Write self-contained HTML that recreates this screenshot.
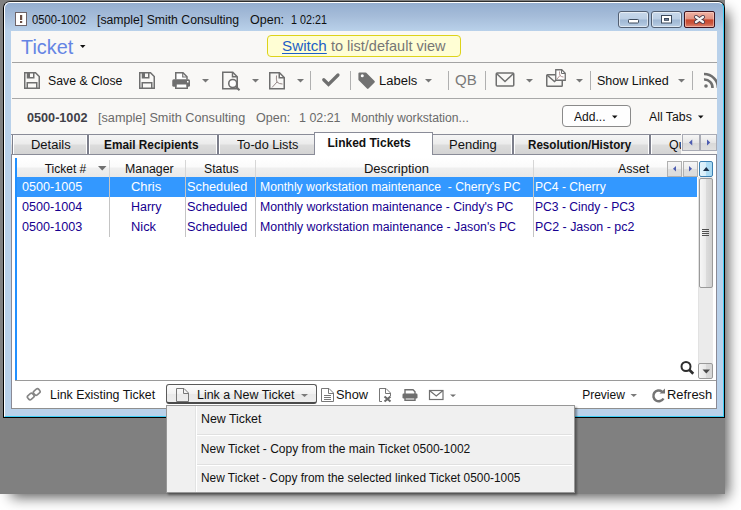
<!DOCTYPE html>
<html><head><meta charset="utf-8">
<style>
html,body{margin:0;padding:0}
body{width:741px;height:510px;position:relative;overflow:hidden;background:#fff;font-family:"Liberation Sans",sans-serif}
.a{position:absolute;box-sizing:border-box}
.t{position:absolute;white-space:pre;font-family:"Liberation Sans",sans-serif}
</style></head><body>
<!-- gray desktop with shadow -->
<div class="a" style="left:0;top:0;width:725px;height:494px;background:#808080;box-shadow:7px 7px 13px -4px rgba(0,0,0,0.66)"></div>
<!-- window frame -->
<div class="a" style="left:3px;top:1px;width:722px;height:417px;border:1px solid #000;border-top-color:#2e2e2e;border-radius:7px 7px 0 0;background:linear-gradient(#93adcf 0px,#a5bcd9 14px,#b9d1ea 29px,#b9d1ea 100%)"></div>
<div class="a" style="left:4px;top:2px;width:720px;height:415px;border-left:1px solid #fff;border-top:1px solid #fff;border-right:1px solid #3ccdf5;border-bottom:1px solid #3ccdf5;border-radius:6px 6px 0 0"></div>
<!-- client -->
<div class="a" style="left:11px;top:31px;width:706px;height:378px;background:#f9f8f6"></div>
<!-- caption buttons -->
<div class="a" style="left:618px;top:11px;width:31px;height:17px;border:1px solid #525f72;border-radius:3px;background:linear-gradient(#c8d8ea 0%,#bccfe5 47%,#9fb7d3 53%,#a9c0da 75%,#bcd0e6 100%);box-shadow:inset 0 0 0 1px rgba(255,255,255,.55)"></div>
<div class="a" style="left:651px;top:11px;width:31px;height:17px;border:1px solid #525f72;border-radius:3px;background:linear-gradient(#c8d8ea 0%,#bccfe5 47%,#9fb7d3 53%,#a9c0da 75%,#bcd0e6 100%);box-shadow:inset 0 0 0 1px rgba(255,255,255,.55)"></div>
<div class="a" style="left:684px;top:11px;width:31px;height:17px;border:1px solid #3e1420;border-radius:2px;background:linear-gradient(#efb2a4 0%,#e29483 45%,#c8472d 53%,#cb563e 75%,#de8774 100%);box-shadow:inset 0 0 0 1px rgba(255,220,210,.5)"></div>
<!-- yellow switch box -->
<div class="a" style="left:267px;top:35px;width:194px;height:22px;border:1px solid #ddd31a;border-radius:4px;background:#fffed4"></div>
<!-- separators -->
<div class="a" style="left:12px;top:62px;width:705px;height:1px;background:#a3a3a3"></div>
<div class="a" style="left:12px;top:98px;width:705px;height:1px;background:#a8a8a8"></div>
<!-- Add button -->
<div class="a" style="left:562px;top:105px;width:69px;height:22px;border:1px solid #8a8a8a;border-radius:4px;background:#fefefe"></div>
<!-- tab strip -->
<div class="a" style="left:11px;top:134px;width:670px;height:1px;background:#8a8c98"></div>
<div class="a" style="left:11px;top:135px;width:670px;height:19px;background:linear-gradient(#f5f5f5 0,#ececec 45%,#dcdcdc 55%,#d4d4d4 100%)"></div>
<div class="a" style="left:11px;top:154px;width:706px;height:1px;background:#8a8c98"></div>
<!-- tab separators -->
<div class="a" style="left:12px;top:135px;width:1px;height:19px;background:#7d7f8b"></div>
<div class="a" style="left:13px;top:135px;width:1px;height:19px;background:#fff"></div>
<div class="a" style="left:86px;top:135px;width:1px;height:19px;background:#fff"></div>
<div class="a" style="left:87px;top:135px;width:2px;height:19px;background:#7d7f8b"></div>
<div class="a" style="left:89px;top:135px;width:1px;height:19px;background:#fff"></div>
<div class="a" style="left:216px;top:135px;width:1px;height:19px;background:#fff"></div>
<div class="a" style="left:217px;top:135px;width:2px;height:19px;background:#7d7f8b"></div>
<div class="a" style="left:219px;top:135px;width:1px;height:19px;background:#fff"></div>
<div class="a" style="left:511px;top:135px;width:1px;height:19px;background:#fff"></div>
<div class="a" style="left:512px;top:135px;width:2px;height:19px;background:#7d7f8b"></div>
<div class="a" style="left:514px;top:135px;width:1px;height:19px;background:#fff"></div>
<div class="a" style="left:648px;top:135px;width:1px;height:19px;background:#fff"></div>
<div class="a" style="left:649px;top:135px;width:2px;height:19px;background:#7d7f8b"></div>
<div class="a" style="left:651px;top:135px;width:1px;height:19px;background:#fff"></div>
<!-- active tab -->
<div class="a" style="left:314px;top:132px;width:119px;height:24px;border:1px solid #8a8c98;border-bottom:none;background:#fff"></div>
<!-- tab scroll buttons -->
<div class="a" style="left:681px;top:134px;width:36px;height:21px;background:#f9f8f6"></div>
<div class="a" style="left:682px;top:134px;width:18px;height:17px;border:1px solid #a9abb5;background:linear-gradient(#f6f6f6,#e6e6e6 50%,#d8d8d8 51%,#e0e0e0)"></div>
<div class="a" style="left:700px;top:134px;width:17px;height:17px;border:1px solid #a9abb5;background:linear-gradient(#f6f6f6,#e6e6e6 50%,#d8d8d8 51%,#e0e0e0)"></div>
<div class="a" style="left:681px;top:154px;width:36px;height:1px;background:#8a8c98"></div>
<!-- content panel -->
<div class="a" style="left:11px;top:155px;width:706px;height:254px;background:#fff;border-left:1px solid #8a8a96;border-right:1px solid #8a8a96;border-bottom:1px solid #8f8f8f"></div>
<!-- grid -->
<div class="a" style="left:15px;top:158px;width:2px;height:222px;background:#2290ff"></div>
<div class="a" style="left:17px;top:158px;width:681px;height:19px;background:linear-gradient(#fff 0,#fbfbfb 45%,#efefef 55%,#e9e9e9 100%)"></div>
<div class="a" style="left:17px;top:177px;width:680px;height:20px;background:#3398ff"></div>
<div class="a" style="left:109px;top:160px;width:1px;height:17px;background:#d6d6d6"></div><div class="a" style="left:109px;top:177px;width:1px;height:60px;background:#c4c4c4"></div>
<div class="a" style="left:185px;top:160px;width:1px;height:17px;background:#d6d6d6"></div><div class="a" style="left:185px;top:177px;width:1px;height:60px;background:#c4c4c4"></div>
<div class="a" style="left:255px;top:160px;width:1px;height:17px;background:#d6d6d6"></div><div class="a" style="left:255px;top:177px;width:1px;height:60px;background:#c4c4c4"></div>
<div class="a" style="left:533px;top:160px;width:1px;height:17px;background:#d6d6d6"></div><div class="a" style="left:533px;top:177px;width:1px;height:60px;background:#c4c4c4"></div>
<div class="a" style="left:15px;top:380px;width:701px;height:1px;background:#9a9a9a"></div>
<!-- grid h-scroll buttons -->
<div class="a" style="left:667px;top:161px;width:15px;height:16px;border:1px solid #b0b0b0;background:linear-gradient(#f6f6f6,#ececec 50%,#dedede 51%,#dcdcdc)"></div>
<div class="a" style="left:683px;top:161px;width:15px;height:16px;border:1px solid #b0b0b0;background:linear-gradient(#f6f6f6,#ececec 50%,#dedede 51%,#dcdcdc)"></div>
<!-- v scrollbar -->
<div class="a" style="left:698px;top:177px;width:15px;height:187px;background:#ebebeb;border-left:1px solid #e2e2e2"></div>
<div class="a" style="left:699px;top:161px;width:14px;height:16px;border:1px solid #3c7fb1;border-radius:2px;background:linear-gradient(90deg,#e3f4fc 0,#d6eefa 50%,#b0def5 51%,#a8d9f2 100%)"></div>
<div class="a" style="left:699px;top:178px;width:14px;height:110px;border:1px solid #9a9a9a;border-radius:2px;background:linear-gradient(90deg,#f6f6f6 0,#eaeaea 50%,#dcdcdc 51%,#d0d0d0 100%)"></div>
<div class="a" style="left:698px;top:363px;width:15px;height:16px;border:1px solid #9a9a9a;border-radius:2px;background:linear-gradient(90deg,#f4f4f4 0,#e8e8e8 50%,#dadada 51%,#d6d6d6 100%)"></div>
<!-- Link a New Ticket button -->
<div class="a" style="left:166px;top:384px;width:151px;height:20px;border:1px solid #5a5a5a;border-bottom:2px solid #4a4a4a;border-radius:3px;background:linear-gradient(#fcfcfc 0%,#f2f2f2 50%,#e9e9e9 55%,#ededed 100%)"></div>
<!-- dropdown menu -->
<div class="a" style="left:166px;top:405px;width:409px;height:88px;border:1px solid #979797;background:#f0f0f0;box-shadow:2px 2px 2px rgba(0,0,0,.35)"></div>
<div class="a" style="left:195px;top:406px;width:1px;height:86px;background:#e2e3e3"></div>
<div class="a" style="left:196px;top:406px;width:1px;height:86px;background:#fff"></div>
<div class="a" style="left:197px;top:434px;width:375px;height:1px;background:#e0e0e0"></div>
<div class="a" style="left:197px;top:435px;width:375px;height:1px;background:#fff"></div>
<div class="a" style="left:197px;top:464px;width:375px;height:1px;background:#e0e0e0"></div>
<div class="a" style="left:197px;top:465px;width:375px;height:1px;background:#fff"></div>
<!-- Qu clipped tab text -->
<div class="a" style="left:652px;top:135px;width:29px;height:19px;overflow:hidden"><span class="t" style="left:17px;top:4px;font-size:12.4px;line-height:12px;color:#111">Queue</span></div>
<svg class="a" style="left:0;top:0" width="741" height="510" viewBox="0 0 741 510">
<g fill="none" stroke="#6f6f6f" stroke-width="1.5">
<!-- title icon -->
<rect x="15.5" y="12.5" width="11" height="13" fill="#fff" stroke="#6e6468" stroke-width="1"/>
</g>
<rect x="20" y="15" width="2.2" height="5" fill="#6a4e44"/>
<rect x="20" y="21" width="2.2" height="2" fill="#6a4e44"/>
<!-- caption glyphs -->
<rect x="628.5" y="19.5" width="10" height="3.5" rx="0.8" fill="#fff" stroke="#3d4a5c" stroke-width="1"/>
<rect x="661.5" y="15.5" width="10" height="7.5" fill="#fff" stroke="#3d4a5c" stroke-width="1"/>
<rect x="664.5" y="18.5" width="4" height="1.8" fill="#7a8aa8" stroke="#3d4a5c" stroke-width="1"/>
<path d="M696,17 L703,22 M703,17 L696,22" stroke="#4a3a48" stroke-width="4" stroke-linecap="round"/>
<path d="M696,17 L703,22 M703,17 L696,22" stroke="#f4f4f4" stroke-width="2.3" stroke-linecap="round"/>
<!-- Ticket dropdown arrow -->
<path d="M80,45 H85.5 L82.75,48 Z" fill="#111"/>
<g fill="none" stroke="#6f6f6f" stroke-width="1.5">
<!-- floppy 1 -->
<path d="M24.75,72.75 H35.5 L39.25,76.5 V88.25 H24.75 Z"/>
<path d="M27.5,73 V77.75 H33.75 V73"/>
<path d="M27.25,88 V82.75 H36.75 V88"/>
<!-- floppy 2 -->
<path d="M139.75,72.75 H150.5 L154.25,76.5 V88.25 H139.75 Z"/>
<path d="M142.5,73 V77.75 H148.75 V73"/>
<path d="M142.25,88 V82.75 H151.75 V88"/>
<!-- printer -->
<path d="M175.75,79.5 V72.75 H183 L187,76.75 V79.5" fill="#fff"/>
<path d="M182.75,73 V77 H186.75" stroke-width="1.2"/>
<!-- preview doc -->
<path d="M222.75,88.75 V72.25 H232.75 L237.25,76.75 V88.75 Z"/>
<path d="M232.5,72.5 V76.75 H237"/>
<circle cx="232.75" cy="83.5" r="4" fill="#fff" stroke-width="1.6"/>
<path d="M235.75,86.5 L239.5,90.25" stroke-width="2"/>
<!-- pdf doc -->
<path d="M269.75,72.75 H279.5 L284.25,77.5 V88.75 H269.75 Z"/>
<path d="M279.25,73 V77.75 H284"/>
</g>
<rect x="27" y="73" width="3" height="5" fill="#6f6f6f"/>
<rect x="142" y="73" width="3" height="5" fill="#6f6f6f"/>
<rect x="172.25" y="79.25" width="17.75" height="7.5" rx="1.5" fill="#6f6f6f"/>
<rect x="187" y="81" width="1.5" height="1.5" fill="#fff"/>
<rect x="176.5" y="84.5" width="10" height="3.25" fill="#fff"/>
<path d="M175.75,84 V88.25 H187.25 V84" fill="none" stroke="#6f6f6f" stroke-width="1.5"/>
<path d="M276.5,75.5 Q276,79.5 277,82 M277,82 L272,87.5 M277,82 Q279,84 282.5,84" fill="none" stroke="#8a7a7a" stroke-width="0.9"/>
<!-- check -->
<path d="M323.75,79.75 L328.5,84.5 L338,75" fill="none" stroke="#6f6f6f" stroke-width="3.2" stroke-linejoin="miter" stroke-linecap="round"/>
<!-- tag -->
<path d="M359.5,73.5 H365.5 L373.75,81.75 L367.75,87.75 L359.5,79.5 Z" fill="#727272" stroke="#727272" stroke-width="2.2" stroke-linejoin="round"/>
<circle cx="362.25" cy="75.75" r="1.5" fill="#fff"/>
<!-- envelope -->
<g fill="none" stroke="#6f6f6f" stroke-width="1.5">
<rect x="496.25" y="73" width="17.5" height="13" rx="1"/>
<path d="M496.5,73.5 L505,81.5 L513.5,73.5"/>
<!-- envelope + pdf -->
<rect x="546.75" y="74.75" width="15.5" height="11.5" rx="0.8"/>
<path d="M547,75 L554.5,81.5 L562,75"/>
</g>
<path d="M555.75,80.25 V69.75 H561.75 L565.25,73.25 V80.25 Z" fill="#fff" stroke="#6f6f6f" stroke-width="1.3"/>
<path d="M561.5,70 V73.5 H565" fill="none" stroke="#6f6f6f" stroke-width="1"/>
<path d="M559.5,71.5 Q559.5,74 560,75.5 M560,75.5 L557,79 M560,75.5 Q561.5,77 563.5,77" fill="none" stroke="#a07878" stroke-width="0.8"/>
<!-- toolbar separators -->
<rect x="310" y="71" width="1" height="19" fill="#b0b0b0"/>
<rect x="350" y="71" width="1" height="19" fill="#b0b0b0"/>
<rect x="448" y="71" width="1" height="19" fill="#b0b0b0"/>
<rect x="485" y="71" width="1" height="19" fill="#b0b0b0"/>
<rect x="590" y="71" width="1" height="19" fill="#b0b0b0"/>
<rect x="692" y="71" width="1" height="19" fill="#b0b0b0"/>
<!-- dropdown arrows -->
<g fill="#777">
<path d="M202,79 H209 L205.5,82.5 Z"/>
<path d="M252,79 H259 L255.5,82.5 Z"/>
<path d="M297,79 H304 L300.5,82.5 Z"/>
<path d="M425,79 H432 L428.5,82.5 Z"/>
<path d="M526,79 H533 L529.5,82.5 Z"/>
<path d="M576,79 H583 L579.5,82.5 Z"/>
<path d="M678,79 H685 L681.5,82.5 Z"/>
</g>
<!-- rss -->
<clipPath id="cc"><rect x="11" y="31" width="706" height="70"/></clipPath>
<g clip-path="url(#cc)" fill="none" stroke="#6f6f6f" stroke-width="2.6">
<circle cx="706" cy="86" r="1.8" fill="#6f6f6f" stroke="none"/>
<path d="M704,79.5 A8,8 0 0 1 712.5,88"/>
<path d="M704,74 A14,14 0 0 1 718,88"/>
</g>
<!-- Add / All tabs arrows -->
<path d="M612,115.5 H617.5 L614.75,118.5 Z" fill="#111"/>
<path d="M698,115.5 H703.5 L700.75,118.5 Z" fill="#111"/>
<!-- tab scroll arrows -->
<path d="M689,142.5 L692.25,139.5 V145.5 Z" fill="#4d5cb0"/>
<path d="M710.25,142.5 L707,139.5 V145.5 Z" fill="#4d5cb0"/>
<!-- grid sort arrow -->
<path d="M98,166 H106.5 L102.25,170.5 Z" fill="#707070"/>
<!-- grid h-scroll arrows -->
<path d="M673,168.75 L676,166 V171.5 Z" fill="#4d5cb0"/>
<path d="M692,168.75 L689,166 V171.5 Z" fill="#4d5cb0"/>
<!-- v scroll up arrow -->
<path d="M703,171 L706.25,167 L709.5,171 Z" fill="#1c3048"/>
<!-- thumb grip -->
<g fill="#505050"><rect x="702" y="229" width="7" height="1"/><rect x="702" y="231" width="7" height="1"/><rect x="702" y="233" width="7" height="1"/><rect x="702" y="235" width="7" height="1"/></g>
<!-- v scroll down arrow -->
<path d="M702.5,369.5 H710 L706.25,373.5 Z" fill="#4a4a4a"/>
<!-- magnifier -->
<circle cx="686" cy="366.5" r="4.5" fill="none" stroke="#2e2e2e" stroke-width="2"/>
<path d="M689.25,369.75 L693.25,373.75" stroke="#2e2e2e" stroke-width="2.6" stroke-linecap="butt"/>
<!-- link icon -->
<g fill="none" stroke="#858585" stroke-width="1.6">
<rect x="27.5" y="394" width="6.5" height="5" rx="1.8" transform="rotate(-40 30.75 396.5)"/>
<rect x="33.5" y="389.5" width="6.5" height="5" rx="1.8" transform="rotate(-40 36.75 392)"/>
</g>
<!-- link a new ticket doc icon -->
<g fill="none" stroke="#777" stroke-width="1">
<path d="M176.5,401.5 V388.5 H184 L188.5,393 V401.5 Z"/>
<path d="M183.5,388.5 V393.5 H188.5"/>
<!-- show doc icon -->
<path d="M321.5,401.5 V388.5 H329 L333.5,393 V401.5 Z"/>
<path d="M328.5,388.5 V393.5 H333.5"/>
<path d="M324,395.5 H331 M324,397.5 H331 M324,399.5 H331"/>
<!-- doc-x icon -->
<path d="M379.5,401.5 V388.5 H386 L390.5,393 V396"/>
<path d="M385.5,388.5 V393.5 H390.5"/>
<path d="M379.5,401.5 H382"/>
</g>
<path d="M384.5,396.5 L390.5,401.5 M390.5,396.5 L384.5,401.5" stroke="#6a6a6a" stroke-width="2.1"/>
<!-- bottom printer -->
<g fill="none" stroke="#6f6f6f" stroke-width="1.4">
<path d="M405,394 V389.75 H413 L415,391.75 V394"/>
<path d="M405,397 V400.25 H415 V397"/>
</g>
<rect x="402.5" y="393.5" width="15" height="5" rx="1.2" fill="#6f6f6f"/>
<!-- bottom envelope -->
<g fill="none" stroke="#6f6f6f" stroke-width="1.2">
<rect x="429.5" y="390.5" width="13.5" height="9"/>
<path d="M429.8,390.8 L436.25,396 L442.7,390.8"/>
</g>
<path d="M450,394.5 H456 L453,397 Z" fill="#6e6e6e"/>
<path d="M301,394 H308 L304.5,397 Z" fill="#7a7a7a"/>
<path d="M630.5,394 H637 L633.75,397 Z" fill="#7a7a7a"/>
<!-- refresh -->
<path d="M662,391.5 A5.4,5.4 0 1 0 663.5,398.5" fill="none" stroke="#747474" stroke-width="2.5"/>
<path d="M659.5,393.5 L665,388.5 L665,393.5 Z" fill="#747474"/>

</svg>
<span class="t" style="left:32.10px;top:14.00px;font-family:'Liberation Sans', sans-serif;font-size:12.5px;font-weight:normal;white-space:pre;line-height:12.5px;color:#101010;transform:scaleX(0.9017);transform-origin:0 0;">0500-1002</span>
<span class="t" style="left:97.02px;top:14.00px;font-family:'Liberation Sans', sans-serif;font-size:12.5px;font-weight:normal;white-space:pre;line-height:12.5px;color:#101010;transform:scaleX(0.9790);transform-origin:0 0;">[sample] Smith Consulting</span>
<span class="t" style="left:250.00px;top:14.00px;font-family:'Liberation Sans', sans-serif;font-size:12.5px;font-weight:normal;white-space:pre;line-height:12.5px;color:#101010;">Open:</span>
<span class="t" style="left:290.64px;top:14.00px;font-family:'Liberation Sans', sans-serif;font-size:12.5px;font-weight:normal;white-space:pre;line-height:12.5px;color:#101010;transform:scaleX(0.8625);transform-origin:0 0;">1 02:21</span>
<span class="t" style="left:21.00px;top:36.00px;font-family:'Liberation Sans', sans-serif;font-size:21px;font-weight:normal;white-space:pre;line-height:21px;color:#6585e4;transform:scaleX(0.9455);transform-origin:0 0;">Ticket</span>
<span class="t" style="left:281.95px;top:39.00px;font-family:'Liberation Sans', sans-serif;font-size:14.5px;font-weight:normal;white-space:pre;line-height:14.5px;color:#1d5fc6;transform:scaleX(1.0488);transform-origin:0 0;text-decoration:underline;text-underline-offset:2px;">Switch</span>
<span class="t" style="left:331.00px;top:39.00px;font-family:'Liberation Sans', sans-serif;font-size:14.5px;font-weight:normal;white-space:pre;line-height:14.5px;color:#767676;">to list/default view</span>
<span class="t" style="left:48.38px;top:75.00px;font-family:'Liberation Sans', sans-serif;font-size:12px;font-weight:normal;white-space:pre;line-height:12px;color:#111;transform:scaleX(1.0225);transform-origin:0 0;">Save &amp; Close</span>
<span class="t" style="left:379.12px;top:75.00px;font-family:'Liberation Sans', sans-serif;font-size:12px;font-weight:normal;white-space:pre;line-height:12px;color:#111;transform:scaleX(1.0824);transform-origin:0 0;">Labels</span>
<span class="t" style="left:454.93px;top:73.00px;font-family:'Liberation Sans', sans-serif;font-size:14px;font-weight:normal;white-space:pre;line-height:14px;color:#7a7a7a;transform:scaleX(1.0737);transform-origin:0 0;">QB</span>
<span class="t" style="left:597.16px;top:75.00px;font-family:'Liberation Sans', sans-serif;font-size:12px;font-weight:normal;white-space:pre;line-height:12px;color:#111;transform:scaleX(1.0433);transform-origin:0 0;">Show Linked</span>
<span class="t" style="left:26.95px;top:112.00px;font-family:'Liberation Sans', sans-serif;font-size:12px;font-weight:bold;white-space:pre;line-height:12px;color:#404048;transform:scaleX(1.0536);transform-origin:0 0;">0500-1002</span>
<span class="t" style="left:97.54px;top:112.00px;font-family:'Liberation Sans', sans-serif;font-size:12px;font-weight:normal;white-space:pre;line-height:12px;color:#6a6a6a;transform:scaleX(1.0558);transform-origin:0 0;">[sample] Smith Consulting</span>
<span class="t" style="left:255.75px;top:112.00px;font-family:'Liberation Sans', sans-serif;font-size:12px;font-weight:normal;white-space:pre;line-height:12px;color:#6a6a6a;transform:scaleX(1.0452);transform-origin:0 0;">Open:</span>
<span class="t" style="left:298.96px;top:112.00px;font-family:'Liberation Sans', sans-serif;font-size:12px;font-weight:normal;white-space:pre;line-height:12px;color:#6a6a6a;transform:scaleX(1.0368);transform-origin:0 0;">1 02:21</span>
<span class="t" style="left:350.69px;top:112.00px;font-family:'Liberation Sans', sans-serif;font-size:12px;font-weight:normal;white-space:pre;line-height:12px;color:#6a6a6a;transform:scaleX(1.0149);transform-origin:0 0;">Monthly workstation...</span>
<span class="t" style="left:573.60px;top:111.00px;font-family:'Liberation Sans', sans-serif;font-size:12px;font-weight:normal;white-space:pre;line-height:12px;color:#111;transform:scaleX(1.0067);transform-origin:0 0;">Add...</span>
<span class="t" style="left:649.20px;top:111.00px;font-family:'Liberation Sans', sans-serif;font-size:12px;font-weight:normal;white-space:pre;line-height:12px;color:#111;transform:scaleX(1.0244);transform-origin:0 0;">All Tabs</span>
<span class="t" style="left:31.02px;top:139.00px;font-family:'Liberation Sans', sans-serif;font-size:12px;font-weight:normal;white-space:pre;line-height:12px;color:#111;transform:scaleX(1.0800);transform-origin:0 0;">Details</span>
<span class="t" style="left:103.81px;top:139.00px;font-family:'Liberation Sans', sans-serif;font-size:12px;font-weight:bold;white-space:pre;line-height:12px;color:#111;transform:scaleX(0.9851);transform-origin:0 0;">Email Recipients</span>
<span class="t" style="left:237.10px;top:139.00px;font-family:'Liberation Sans', sans-serif;font-size:12px;font-weight:normal;white-space:pre;line-height:12px;color:#111;transform:scaleX(1.0569);transform-origin:0 0;">To-do Lists</span>
<span class="t" style="left:327.50px;top:137.00px;font-family:'Liberation Sans', sans-serif;font-size:12px;font-weight:bold;white-space:pre;line-height:12px;color:#111;">Linked Tickets</span>
<span class="t" style="left:449.22px;top:139.00px;font-family:'Liberation Sans', sans-serif;font-size:12px;font-weight:normal;white-space:pre;line-height:12px;color:#111;transform:scaleX(1.0833);transform-origin:0 0;">Pending</span>
<span class="t" style="left:527.93px;top:139.00px;font-family:'Liberation Sans', sans-serif;font-size:12px;font-weight:bold;white-space:pre;line-height:12px;color:#111;transform:scaleX(0.9679);transform-origin:0 0;">Resolution/History</span>
<span class="t" style="left:44.70px;top:163.00px;font-family:'Liberation Sans', sans-serif;font-size:12px;font-weight:normal;white-space:pre;line-height:12px;color:#111;">Ticket #</span>
<span class="t" style="left:124.57px;top:163.00px;font-family:'Liberation Sans', sans-serif;font-size:12px;font-weight:normal;white-space:pre;line-height:12px;color:#111;transform:scaleX(1.0283);transform-origin:0 0;">Manager</span>
<span class="t" style="left:204.28px;top:163.00px;font-family:'Liberation Sans', sans-serif;font-size:12px;font-weight:normal;white-space:pre;line-height:12px;color:#111;transform:scaleX(1.0212);transform-origin:0 0;">Status</span>
<span class="t" style="left:364.32px;top:163.00px;font-family:'Liberation Sans', sans-serif;font-size:12px;font-weight:normal;white-space:pre;line-height:12px;color:#111;transform:scaleX(1.0810);transform-origin:0 0;">Description</span>
<span class="t" style="left:618.10px;top:163.00px;font-family:'Liberation Sans', sans-serif;font-size:12px;font-weight:normal;white-space:pre;line-height:12px;color:#111;transform:scaleX(1.0367);transform-origin:0 0;">Asset</span>
<span class="t" style="left:21.95px;top:181.00px;font-family:'Liberation Sans', sans-serif;font-size:12px;font-weight:normal;white-space:pre;line-height:12px;color:#fff;transform:scaleX(1.0500);transform-origin:0 0;">0500-1005</span>
<span class="t" style="left:131.32px;top:181.00px;font-family:'Liberation Sans', sans-serif;font-size:12px;font-weight:normal;white-space:pre;line-height:12px;color:#fff;transform:scaleX(1.0778);transform-origin:0 0;">Chris</span>
<span class="t" style="left:187.44px;top:181.00px;font-family:'Liberation Sans', sans-serif;font-size:12px;font-weight:normal;white-space:pre;line-height:12px;color:#fff;transform:scaleX(1.0636);transform-origin:0 0;">Scheduled</span>
<span class="t" style="left:260.28px;top:181.00px;font-family:'Liberation Sans', sans-serif;font-size:12px;font-weight:normal;white-space:pre;line-height:12px;color:#fff;transform:scaleX(1.0161);transform-origin:0 0;">Monthly workstation maintenance&nbsp; - Cherry's PC</span>
<span class="t" style="left:535.29px;top:181.00px;font-family:'Liberation Sans', sans-serif;font-size:12px;font-weight:normal;white-space:pre;line-height:12px;color:#fff;transform:scaleX(1.0101);transform-origin:0 0;">PC4 - Cherry</span>
<span class="t" style="left:21.95px;top:201.00px;font-family:'Liberation Sans', sans-serif;font-size:12px;font-weight:normal;white-space:pre;line-height:12px;color:#160090;transform:scaleX(1.0500);transform-origin:0 0;">0500-1004</span>
<span class="t" style="left:131.36px;top:201.00px;font-family:'Liberation Sans', sans-serif;font-size:12px;font-weight:normal;white-space:pre;line-height:12px;color:#160090;transform:scaleX(1.0393);transform-origin:0 0;">Harry</span>
<span class="t" style="left:187.44px;top:201.00px;font-family:'Liberation Sans', sans-serif;font-size:12px;font-weight:normal;white-space:pre;line-height:12px;color:#160090;transform:scaleX(1.0636);transform-origin:0 0;">Scheduled</span>
<span class="t" style="left:260.28px;top:201.00px;font-family:'Liberation Sans', sans-serif;font-size:12px;font-weight:normal;white-space:pre;line-height:12px;color:#160090;transform:scaleX(1.0232);transform-origin:0 0;">Monthly workstation maintenance - Cindy's PC</span>
<span class="t" style="left:535.29px;top:201.00px;font-family:'Liberation Sans', sans-serif;font-size:12px;font-weight:normal;white-space:pre;line-height:12px;color:#160090;transform:scaleX(1.0103);transform-origin:0 0;">PC3 - Cindy - PC3</span>
<span class="t" style="left:21.95px;top:221.00px;font-family:'Liberation Sans', sans-serif;font-size:12px;font-weight:normal;white-space:pre;line-height:12px;color:#160090;transform:scaleX(1.0500);transform-origin:0 0;">0500-1003</span>
<span class="t" style="left:131.33px;top:221.00px;font-family:'Liberation Sans', sans-serif;font-size:12px;font-weight:normal;white-space:pre;line-height:12px;color:#160090;transform:scaleX(1.0727);transform-origin:0 0;">Nick</span>
<span class="t" style="left:187.44px;top:221.00px;font-family:'Liberation Sans', sans-serif;font-size:12px;font-weight:normal;white-space:pre;line-height:12px;color:#160090;transform:scaleX(1.0636);transform-origin:0 0;">Scheduled</span>
<span class="t" style="left:260.27px;top:221.00px;font-family:'Liberation Sans', sans-serif;font-size:12px;font-weight:normal;white-space:pre;line-height:12px;color:#160090;transform:scaleX(1.0279);transform-origin:0 0;">Monthly workstation maintenance - Jason's PC</span>
<span class="t" style="left:535.27px;top:221.00px;font-family:'Liberation Sans', sans-serif;font-size:12px;font-weight:normal;white-space:pre;line-height:12px;color:#160090;transform:scaleX(1.0340);transform-origin:0 0;">PC2 - Jason - pc2</span>
<span class="t" style="left:50.17px;top:389.00px;font-family:'Liberation Sans', sans-serif;font-size:12px;font-weight:normal;white-space:pre;line-height:12px;color:#111;transform:scaleX(1.0307);transform-origin:0 0;">Link Existing Ticket</span>
<span class="t" style="left:196.86px;top:389.00px;font-family:'Liberation Sans', sans-serif;font-size:12px;font-weight:normal;white-space:pre;line-height:12px;color:#111;transform:scaleX(1.0355);transform-origin:0 0;">Link a New Ticket</span>
<span class="t" style="left:335.93px;top:389.00px;font-family:'Liberation Sans', sans-serif;font-size:12px;font-weight:normal;white-space:pre;line-height:12px;color:#111;transform:scaleX(1.0655);transform-origin:0 0;">Show</span>
<span class="t" style="left:582.20px;top:389.00px;font-family:'Liberation Sans', sans-serif;font-size:12px;font-weight:normal;white-space:pre;line-height:12px;color:#111;">Preview</span>
<span class="t" style="left:667.12px;top:389.00px;font-family:'Liberation Sans', sans-serif;font-size:12px;font-weight:normal;white-space:pre;line-height:12px;color:#111;transform:scaleX(1.0775);transform-origin:0 0;">Refresh</span>
<span class="t" style="left:200.77px;top:413.00px;font-family:'Liberation Sans', sans-serif;font-size:12px;font-weight:normal;white-space:pre;line-height:12px;color:#111;transform:scaleX(1.0298);transform-origin:0 0;">New Ticket</span>
<span class="t" style="left:200.80px;top:443.00px;font-family:'Liberation Sans', sans-serif;font-size:12px;font-weight:normal;white-space:pre;line-height:12px;color:#111;">New Ticket - Copy from the main Ticket 0500-1002</span>
<span class="t" style="left:200.81px;top:472.00px;font-family:'Liberation Sans', sans-serif;font-size:12px;font-weight:normal;white-space:pre;line-height:12px;color:#111;transform:scaleX(0.9894);transform-origin:0 0;">New Ticket - Copy from the selected linked Ticket 0500-1005</span>
</body></html>
